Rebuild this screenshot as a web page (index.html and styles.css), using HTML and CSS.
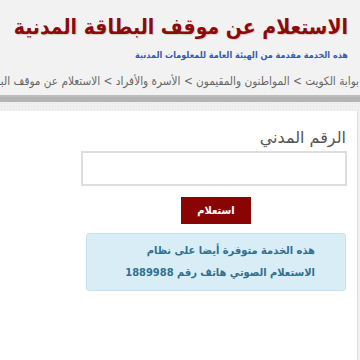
FILE: index.html
```html
<!DOCTYPE html>
<html lang="ar" dir="rtl">
<head>
  <meta charset="UTF-8" />
  <meta name="viewport" content="width=device-width, initial-scale=1.0"/>
  <title>الاستعلام عن موقف البطاقة المدنية</title>
  <link rel="stylesheet" href="styles.css">
</head>
<body>

  <div class="page-head">
    <h1 class="title">الاستعلام عن موقف البطاقة المدنية</h1>
    <p class="subtitle">هذه الخدمة مقدمة من الهيئة العامة للمعلومات المدنية</p>
  </div>

  <div class="breadcrumb">
    <span>بوابة</span> <span>الكويت</span> <span class="sep">&gt;</span>
    <span>المواطنون</span> <span>والمقيمون</span> <span class="sep">&gt;</span>
    <span>الأسرة</span> <span>والأفراد</span> <span class="sep">&gt;</span>
    <span>الاستعلام</span> <span>عن</span> <span>موقف</span> <span>البطاقة</span> <span>المدنية</span>
  </div>

  <div class="rule"></div>
  <div class="dots"></div>

  <div class="panel">
    <form class="inquiry">
      <label for="civil-id">الرقم المدني</label>
      <input type="text" id="civil-id" name="civilId">
      <button type="button">استعلام</button>
      <div class="notice">
        <p>هذه الخدمة متوفرة أيضا على نظام</p>
        <p>الاستعلام الصوتي هاتف رقم 1889988</p>
      </div>
    </form>
  </div>

</body>
</html>
```

FILE: styles.css
```css
* {
  box-sizing: border-box;
  margin: 0;
  padding: 0;
  font-family: 'DejaVu Sans Condensed', 'DejaVu Sans', sans-serif;
}

body {
  background: #f2f2f2;
  width: 360px;
  height: 360px;
  overflow: hidden;
}

.page-head {
  padding: 12px 12px 0 0;
}

.title {
  font-size: 21px;
  line-height: 30px;
  color: #8b0a0a;
  font-weight: bold;
  white-space: nowrap;
  text-shadow: 1px 1px 1px rgba(0, 0, 0, 0.15);
}

.subtitle {
  margin-top: 6px;
  font-size: 9px;
  line-height: 14px;
  font-weight: bold;
  color: #3a5aa8;
  white-space: nowrap;
}

.breadcrumb {
  height: 33px;
  padding: 11px 1px 0 0;
  overflow: hidden;
  font-size: 11.7px;
  line-height: 16px;
  color: #666;
  white-space: nowrap;
}

.rule {
  height: 7px;
  background: #b4b4b4;
  border-top: 2px solid #bdbdbd;
}

.dots {
  height: 9px;
  background-color: #f0f0f0;
  background-image: radial-gradient(#e4e4e4 1px, transparent 1px);
  background-size: 3px 3px;
}

.panel {
  background: #fff;
  border-right: 1px solid #dcdcdc;
  margin-right: 2px;
  height: 260px;
  padding: 17px 10px 0 0;
}

.inquiry {
  width: 266px;
  display: flex;
  flex-direction: column;
  align-items: center;
}

.inquiry label {
  align-self: stretch;
  font-family: 'DejaVu Sans', sans-serif;
  font-size: 16px;
  line-height: 20px;
  color: #555;
  padding-right: 1px;
}

.inquiry input {
  width: 100%;
  height: 35px;
  margin-top: 3px;
  border: 2px solid #dedede;
  outline: none;
}

.inquiry button {
  margin-top: 11px;
  width: 70px;
  height: 27px;
  border: none;
  background: #8b0404;
  color: #fff;
  font-size: 11px;
  font-weight: bold;
  margin-left: 4px;
}

.notice {
  margin-top: 9px;
  width: 260px;
  margin-right: -4px;
  background: #d9edf7;
  border: 1px solid #c4e3f0;
  border-radius: 3px;
  color: #31708f;
  font-size: 11px;
  font-weight: bold;
  line-height: 22px;
  padding: 6px 30px 6px 10px;
  white-space: nowrap;
}
```
